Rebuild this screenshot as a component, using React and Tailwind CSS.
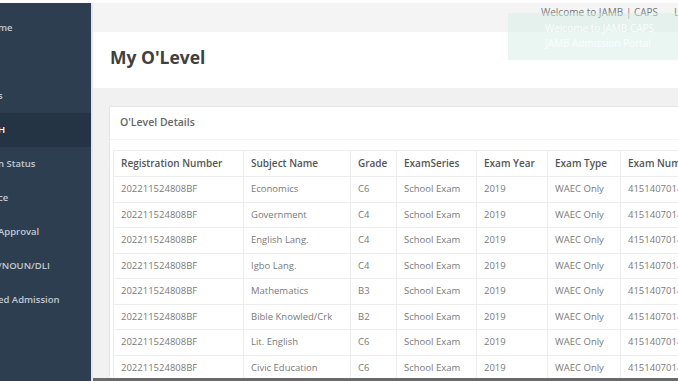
import React from 'react';

const menu = [
  { hide: 'Ho', show: 'me' },
  { hide: '', show: '' },
  { hide: 'My Result', show: 's' },
  { hide: 'OLEVEL SEARC', show: 'H', active: true },
  { hide: 'Admissio', show: 'n Status' },
  { hide: 'Change of Choi', show: 'ce' },
  { hide: 'Institution ', show: 'Approval' },
  { hide: 'Transfer to ODL', show: '/NOUN/DLI' },
  { hide: 'Print Accept', show: 'ed Admission' },
];

const subjects = [
  ['Economics', 'C6'],
  ['Government', 'C4'],
  ['English Lang.', 'C4'],
  ['Igbo Lang.', 'C4'],
  ['Mathematics', 'B3'],
  ['Bible Knowled/Crk', 'B2'],
  ['Lit. English', 'C6'],
  ['Civic Education', 'C6'],
];

const cols = [
  { label: 'Registration Number', w: 'w-[130px]' },
  { label: 'Subject Name', w: 'w-[107px]' },
  { label: 'Grade', w: 'w-[46px]' },
  { label: 'ExamSeries', w: 'w-[80px]' },
  { label: 'Exam Year', w: 'w-[71px]' },
  { label: 'Exam Type', w: 'w-[73px]' },
  { label: 'Exam Number', w: 'w-[110px]' },
];

function SideItem({ item }) {
  return (
    <div className={`h-[34px] flex items-center ${item.active ? 'bg-[#253444] text-white' : 'text-[#c3c9d0]'}`}>
      <span className="inline-flex -ml-[2px] text-[9.5px] font-semibold whitespace-nowrap">
        <span className="w-0 flex justify-end">{item.hide}</span>
        <span>{item.show}</span>
      </span>
    </div>
  );
}

export default function App() {
  return (
    <div className="w-[678px] h-[381px] overflow-hidden flex flex-col bg-white font-['Open_Sans',sans-serif]">
      <div className="h-[3px] bg-white shrink-0" />
      <div className="flex flex-1 min-h-0">
        <aside className="w-[91px] shrink-0 bg-[#2d3e50] pt-[8px] overflow-hidden">
          {menu.map((m, i) => (
            <SideItem key={i} item={m} />
          ))}
        </aside>
        <div className="w-[2px] shrink-0 bg-[#e3e5e8]" />
        <main className="relative flex-1 min-w-0 flex flex-col bg-[#f1f1f1]">
          <div className="h-[29px] shrink-0 bg-[#f4f4f4] flex items-start pt-[2px] pl-[448px] whitespace-nowrap text-[10px] leading-[14px] text-[#777]">
            <span className="shrink-0">Welcome to JAMB | CAPS</span>
            <span className="shrink-0 ml-[16px]">Logout</span>
          </div>
          <div className="h-[56px] shrink-0 bg-white flex items-center px-[17px] pb-[6px]">
            <h1 className="text-[17.5px] font-bold text-[#404040]">My O'Level</h1>
          </div>
          <div className="flex-1 min-h-0 overflow-hidden pt-[18px] pl-[16px]">
            <div className="w-[700px] bg-white border border-[#e6e6e6] border-b-0">
              <div className="h-[33px] flex items-center px-[10px] border-b border-[#f2f2f2] text-[10.5px] font-semibold text-[#666]">
                O'Level Details
              </div>
              <div className="pt-[10px] px-[3px]">
                <table className="border-collapse text-[9.5px] text-left">
                  <thead>
                    <tr className="h-[26px]">
                      {cols.map((c) => (
                        <th key={c.label} className={`${c.w} border border-[#ededed] px-[7px] text-[10px] font-semibold text-[#555] whitespace-nowrap`}>
                          {c.label}
                        </th>
                      ))}
                    </tr>
                  </thead>
                  <tbody>
                    {subjects.map(([s, g]) => (
                      <tr key={s} className="h-[25.5px] text-[#7a7a7a]">
                        <td className="border border-[#ededed] px-[7px] whitespace-nowrap">202211524808BF</td>
                        <td className="border border-[#ededed] px-[7px] whitespace-nowrap">{s}</td>
                        <td className="border border-[#ededed] px-[7px]">{g}</td>
                        <td className="border border-[#ededed] px-[7px] whitespace-nowrap">School Exam</td>
                        <td className="border border-[#ededed] px-[7px]">2019</td>
                        <td className="border border-[#ededed] px-[7px] whitespace-nowrap">WAEC Only</td>
                        <td className="border border-[#ededed] px-[7px] whitespace-nowrap">41514070147FH</td>
                      </tr>
                    ))}
                  </tbody>
                </table>
              </div>
            </div>
          </div>
          <div className="h-[3px] shrink-0 bg-[#6a6a6a]" />
          <div className="absolute top-[10px] left-[415px] w-[200px] h-[47px] bg-[#d4eee6]/50 pl-[37px] pt-[8px] text-[10px] leading-[15px] text-white/80 whitespace-nowrap">
            <div>Welcome to JAMB CAPS</div>
            <div>JAMB Admission Portal</div>
          </div>
        </main>
      </div>
    </div>
  );
}
